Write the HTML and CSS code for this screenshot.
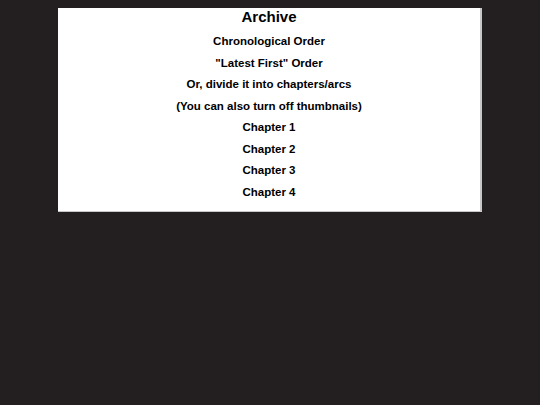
FILE: index.html
```html
<!DOCTYPE html>
<html lang="en">
<head>
    <meta charset="UTF-8">
    <meta name="viewport" content="width=device-width, initial-scale=1.0">
    <title>Archive</title>
    <link rel="stylesheet" href="styles.css">
</head>
<body>
    <div class="archive">
        <h1>Archive</h1>
        <ul class="archive-list">
            <li><a href="#">Chronological Order</a></li>
            <li><a href="#">"Latest First" Order</a></li>
            <li>Or, divide it into chapters/arcs</li>
            <li>(You can also turn off thumbnails)</li>
            <li><a href="#">Chapter 1</a></li>
            <li><a href="#">Chapter 2</a></li>
            <li><a href="#">Chapter 3</a></li>
            <li><a href="#">Chapter 4</a></li>
        </ul>
    </div>
</body>
</html>
```

FILE: styles.css
```css
/* 深色背景 */
body {
    margin: 0;
    padding-top: 8px;
    background-color: #231f20;
    font-family: "Liberation Sans", Arial, sans-serif;
    font-weight: bold;
    color: #000;
}

/* 白色存档框 */
.archive {
    width: 424px;
    box-sizing: border-box;
    margin: 0 auto;
    padding: 1px 0 8px;
    background-color: #fff;
    border-right: 2px solid #c8c8c8;
    border-bottom: 1px solid #c8c8c8;
}

/* 标题 */
h1 {
    margin: 0 0 7px;
    font-size: 15px;
    line-height: 15px;
    text-align: center;
}

/* 链接列表 */
.archive-list {
    list-style: none;
    margin: 0;
    padding: 0;
    text-align: center;
    font-size: 11.5px;
    line-height: 21.5px;
}

.archive-list a {
    color: #000;
    text-decoration: none;
}
```
